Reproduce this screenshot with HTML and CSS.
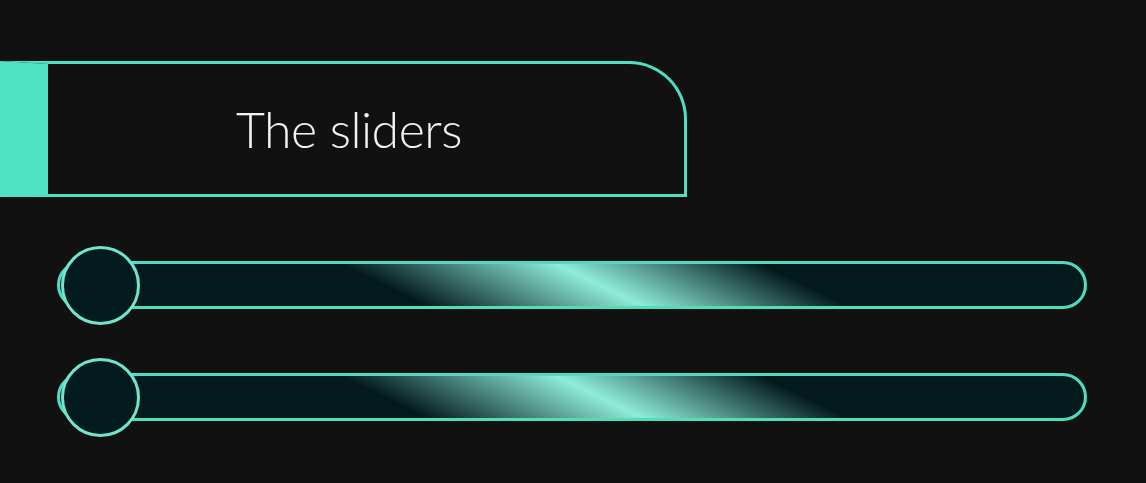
FILE: index.html
```html
<!DOCTYPE html>
<html lang="en">
<head>
<meta charset="utf-8">
<title>The sliders</title>
<link rel="stylesheet" href="styles.css">
</head>
<body>
  <header class="banner">
    <h1 class="banner-title">The sliders</h1>
  </header>
  <main class="sliders">
    <div class="slider">
      <div class="track"></div>
      <div class="thumb"></div>
    </div>
    <div class="slider">
      <div class="track"></div>
      <div class="thumb"></div>
    </div>
  </main>
</body>
</html>
```

FILE: styles.css
```css
html, body {
  margin: 0;
  padding: 0;
  background: #111111;
}

body {
  width: 1146px;
  height: 483px;
  overflow: hidden;
  font-family: "Lato", "Open Sans", sans-serif;
}

.banner {
  box-sizing: border-box;
  margin-top: 61px;
  width: 687px;
  height: 136px;
  border: 3px solid #4fe0c3;
  border-left: 48px solid #4fe3c4;
  border-top-right-radius: 58px;
  display: flex;
  align-items: center;
  padding-left: 188px;
}

.banner-title {
  margin: 0;
  font-weight: 300;
  font-size: 50px;
  line-height: 1;
  color: #f2f2f2;
  letter-spacing: -0.5px;
}

.sliders {
  display: flex;
  flex-direction: column;
  gap: 32px;
  margin-top: 48px;
  padding-left: 57px;
}

.slider {
  position: relative;
  width: 1030px;
  height: 80px;
  display: flex;
  align-items: center;
}

.track {
  box-sizing: border-box;
  width: 1030px;
  height: 48px;
  border: 3px solid #4fdcbf;
  border-radius: 24px;
  background: linear-gradient(26deg, #031a1d 33%, #8eecd9 52.5%, #031a1d 71%);
}

.thumb {
  position: absolute;
  left: 4px;
  top: 1px;
  box-sizing: border-box;
  width: 79px;
  height: 79px;
  border-radius: 50%;
  border: 3px solid #72e4cd;
  background: #031b1e;
}
```
